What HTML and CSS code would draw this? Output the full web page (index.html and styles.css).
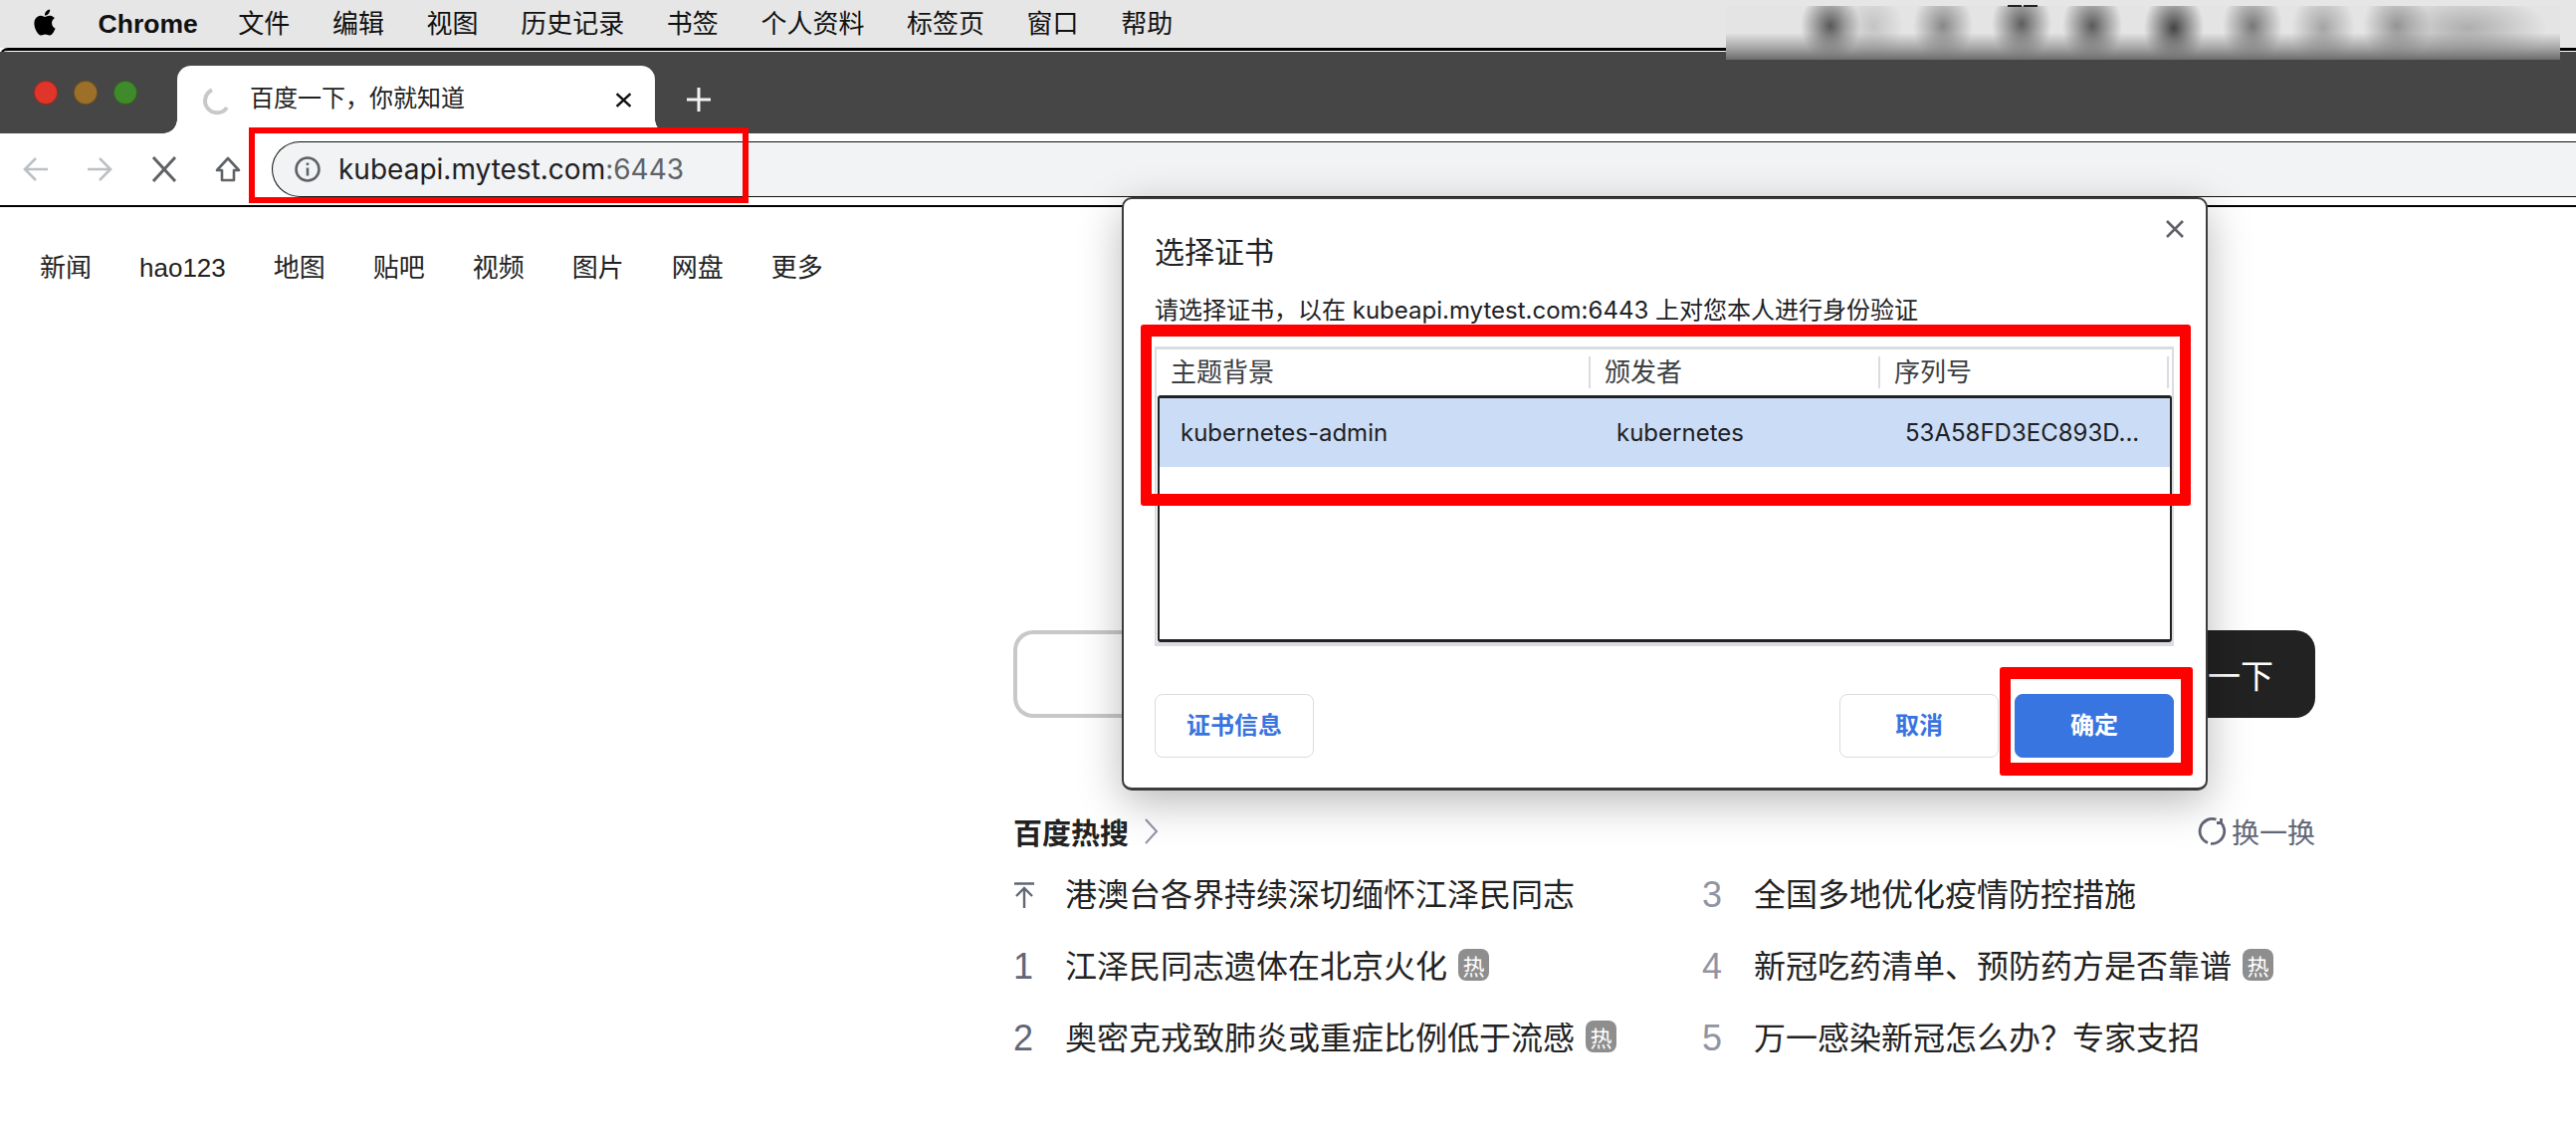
FILE: index.html
```html
<!DOCTYPE html>
<html lang="zh-CN">
<head>
<meta charset="utf-8">
<title>百度一下，你就知道</title>
<link rel="stylesheet" href="styles.css">
</head>
<body>
<header class="menubar">
  <svg class="apple" viewBox="0 0 24 24"><path d="M12.152 6.896c-.948 0-2.415-1.078-3.96-1.04-2.04.027-3.91 1.183-4.961 3.014-2.117 3.675-.546 9.103 1.519 12.09 1.013 1.454 2.208 3.09 3.792 3.039 1.52-.065 2.09-.987 3.935-.987 1.831 0 2.35.987 3.96.948 1.637-.026 2.676-1.48 3.676-2.948 1.156-1.688 1.636-3.325 1.662-3.415-.039-.013-3.182-1.221-3.22-4.857-.026-3.04 2.48-4.494 2.597-4.559-1.429-2.09-3.623-2.324-4.39-2.376-2-.156-3.675 1.09-4.61 1.09zM15.53 3.83c.843-1.012 1.4-2.427 1.245-3.83-1.207.052-2.662.805-3.532 1.818-.78.896-1.454 2.338-1.273 3.714 1.338.104 2.715-.688 3.559-1.701"/></svg>
  <strong class="app-name">Chrome</strong>
  <span>文件</span><span>编辑</span><span>视图</span><span>历史记录</span><span>书签</span><span>个人资料</span><span>标签页</span><span>窗口</span><span>帮助</span>
</header>

<div class="window">
  <div class="tabbar">
    <div class="lights"><i class="light red"></i><i class="light amber"></i><i class="light green"></i></div>
    <div class="tab">
      <svg class="spinner" viewBox="0 0 28 28"><path d="M11 2.4A12 12 0 1 0 26 20" fill="none" stroke="#c8c8c8" stroke-width="4"/></svg>
      <span class="tab-title">百度一下，你就知道</span>
      <svg class="tab-close" viewBox="0 0 16 14"><path d="M1.5 1l13 12M14.5 1l-13 12" fill="none" stroke="#111" stroke-width="2.4"/></svg>
    </div>
    <svg class="new-tab" viewBox="0 0 24 24"><path d="M12 0v24M0 12h24" fill="none" stroke="#f2f2f2" stroke-width="3"/></svg>
  </div>

  <div class="toolbar">
    <svg class="tool back" viewBox="0 0 26 26"><path d="M25 13H3M13 2L2 13l11 11" fill="none" stroke="#bcc0c4" stroke-width="2.6"/></svg>
    <svg class="tool forward" viewBox="0 0 26 26"><path d="M1 13h22M13 2l11 11-11 11" fill="none" stroke="#bcc0c4" stroke-width="2.6"/></svg>
    <svg class="tool stop" viewBox="0 0 26 26"><path d="M2 1l22 24M24 1L2 25" fill="none" stroke="#5f6368" stroke-width="3"/></svg>
    <svg class="tool home" viewBox="0 0 26 26"><path d="M13 2L2 14h5v10h12V14h5z" fill="none" stroke="#5f6368" stroke-width="2.6" stroke-linejoin="round"/></svg>
    <div class="omnibox">
      <svg class="info" viewBox="0 0 28 28"><circle cx="14" cy="14" r="11.5" fill="none" stroke="#5f6368" stroke-width="2.6"/><path d="M14 12.5v8M14 7.5v2.6" stroke="#5f6368" stroke-width="2.6" fill="none"/></svg>
      <span class="url">kubeapi.mytest.com<span class="port">:6443</span></span>
    </div>
  </div>

  <main class="page">
    <nav class="nav">
      <a>新闻</a><a>hao123</a><a>地图</a><a>贴吧</a><a>视频</a><a>图片</a><a>网盘</a><a>更多</a>
    </nav>
    <section class="center">
      <div class="search">
        <div class="search-input"></div>
        <div class="search-btn">百度一下</div>
      </div>
      <div class="hot-head">
        <div class="hot-title"><strong>百度热搜</strong>
          <svg class="chev" viewBox="0 0 15 26"><path d="M2 1l11 12L2 25" fill="none" stroke="#9195a3" stroke-width="2"/></svg>
        </div>
        <div class="refresh">
          <svg class="refresh-icon" viewBox="0 0 30 30"><path d="M18.5 3A12.5 12.5 0 0 0 10 26.5M13 27.3A12.5 12.5 0 0 0 22.5 5.5M23.5 2v4.5H19" fill="none" stroke="#626675" stroke-width="2.8"/></svg>
          <span>换一换</span>
        </div>
      </div>
      <ul class="hot-list">
        <li><svg class="pin" viewBox="0 0 22 26"><path d="M1 1.5h20M11 26V7M3 14l8-8 8 8" fill="none" stroke="#626675" stroke-width="2.4"/></svg><span class="hot-text">港澳台各界持续深切缅怀江泽民同志</span></li>
        <li><b class="rank low">3</b><span class="hot-text">全国多地优化疫情防控措施</span></li>
        <li><b class="rank">1</b><span class="hot-text">江泽民同志遗体在北京火化</span><em class="badge">热</em></li>
        <li><b class="rank low">4</b><span class="hot-text">新冠吃药清单、预防药方是否靠谱</span><em class="badge">热</em></li>
        <li><b class="rank">2</b><span class="hot-text">奥密克戎致肺炎或重症比例低于流感</span><em class="badge">热</em></li>
        <li><b class="rank low">5</b><span class="hot-text">万一感染新冠怎么办？专家支招</span></li>
      </ul>
    </section>
  </main>
</div>

<div class="blur-patch"></div>

<div class="dialog">
  <svg class="dialog-close" viewBox="0 0 20 18"><path d="M2 1l16 16M18 1L2 17" fill="none" stroke="#5f6368" stroke-width="2.6"/></svg>
  <h2 class="dialog-title">选择证书</h2>
  <p class="dialog-sub">请选择证书，以在 kubeapi.mytest.com:6443 上对您本人进行身份验证</p>
  <div class="table">
    <div class="thead">
      <span class="th th-subject">主题背景</span>
      <span class="th th-issuer">颁发者</span>
      <span class="th th-serial">序列号</span>
    </div>
    <div class="tbody">
      <div class="row">
        <span class="td td-subject">kubernetes-admin</span>
        <span class="td td-issuer">kubernetes</span>
        <span class="td td-serial">53A58FD3EC893D...</span>
      </div>
    </div>
  </div>
  <div class="dialog-actions">
    <button class="btn">证书信息</button>
    <div class="actions-right">
      <button class="btn">取消</button>
      <button class="btn primary">确定</button>
    </div>
  </div>
</div>

<div class="mark mark-url"></div>
<div class="mark mark-table"></div>
<div class="mark mark-ok"></div>
</body>
</html>
```
FILE: styles.css
```css
* { box-sizing: border-box; }
html, body { margin: 0; padding: 0; }
body {
  width: 2588px;
  height: 1148px;
  overflow: hidden;
  position: relative;
  background: #fff;
  color: #222;
  font-family: "Liberation Sans", "Noto Sans CJK SC", sans-serif;
}

/* macOS menu bar */
.menubar {
  height: 48px;
  background: #e6e6e6;
  display: flex;
  align-items: center;
  gap: 42.6px;
  padding-left: 32px;
  font-size: 26px;
  color: #111;
}
.menubar span { margin-top: -5px; }
.apple { width: 26px; height: 31px; margin-top: -4px; fill: #000; margin-right: -2px; }
.app-name { font-size: 26.5px; font-weight: 700; margin-right: -2px; }

/* browser window */
.window {
  border-top: 3px solid #000;
  border-top-left-radius: 8px;
}
.tabbar {
  height: 82px;
  margin-top: 1px;
  background: #464646;
  display: flex;
  align-items: flex-end;
  padding-left: 34px;
}
.lights { display: flex; gap: 16px; align-self: flex-start; margin-top: 29px; }
.light { width: 24px; height: 24px; border-radius: 50%; border: 1px solid rgba(0,0,0,.25); }
.red { background: #e0352a; }
.amber { background: #9c7028; }
.green { background: #3f8a2a; }
.tab {
  position: relative;
  margin-left: 40px;
  width: 480px;
  height: 68px;
  background: #fff;
  border-radius: 14px 14px 0 0;
  display: flex;
  align-items: flex-start;
  padding: 22px 23px 0 24px;
}
.tab::before {
  content: "";
  position: absolute;
  left: -14px;
  bottom: 0;
  width: 14px;
  height: 14px;
  background: radial-gradient(circle at 0 0, transparent 13.5px, #fff 14px);
}
.tab::after {
  content: "";
  position: absolute;
  right: -14px;
  bottom: 0;
  width: 14px;
  height: 14px;
  background: radial-gradient(circle at 100% 0, transparent 13.5px, #fff 14px);
}
.spinner { width: 28px; height: 28px; flex: none; }
.tab-title { margin-left: 21px; font-size: 24px; line-height: 22px; color: #222; flex: 1; }
.tab-close { width: 17px; height: 15px; margin-top: 5px; flex: none; }
.new-tab { width: 24px; height: 24px; margin: 0 0 22px 32px; }

.toolbar {
  height: 74px;
  background: #fff;
  border-bottom: 2px solid #000;
  padding: 8px 0 0 23px;
  display: flex;
  align-items: flex-start;
}
.tool { width: 26px; height: 26px; flex: none; margin-top: 15px; }
.forward { margin-left: 38px; }
.stop { margin-left: 39px; }
.home { margin-left: 38px; }
.omnibox {
  flex: 1;
  margin-left: 31px;
  height: 56px;
  border: solid #111;
  border-width: 1px 0 1px 1px;
  border-radius: 28px 0 0 28px;
  background: #f1f3f4;
  display: flex;
  align-items: center;
  padding-left: 21px;
}
.info { width: 28px; height: 28px; flex: none; }
.url { margin-left: 17px; font-family: Inter, "Liberation Sans", sans-serif; font-size: 28px; color: #202124; }
.port { color: #5f6368; }

/* Baidu page */
.page { background: #fff; }
.nav {
  display: flex;
  gap: 48px;
  padding: 46px 0 0 40px;
  font-size: 26px;
  line-height: 30px;
  color: #222;
}
.center { width: 1308px; margin: 0 0 0 1018px; padding-top: 349px; }
.search { display: flex; height: 88px; }
.search-input {
  flex: 1;
  border: 4px solid #c8c8c8;
  border-right: 0;
  border-radius: 20px 0 0 20px;
}
.search-btn {
  width: 216px;
  background: #222;
  color: #fff;
  font-size: 33px;
  border-radius: 0 20px 20px 0;
  display: flex;
  align-items: center;
  justify-content: center;
}
.hot-head {
  display: flex;
  justify-content: space-between;
  align-items: center;
  margin-top: 98px;
  height: 32px;
}
.hot-title { display: flex; align-items: center; gap: 15px; font-size: 29px; color: #222; }
.chev { width: 15px; height: 26px; }
.refresh { display: flex; align-items: center; gap: 4px; font-size: 28px; color: #626675; }
.refresh-icon { width: 30px; height: 30px; }
.hot-list {
  list-style: none;
  margin: 28px 0 0;
  padding: 0;
  display: grid;
  grid-template-columns: 692px 1fr;
  grid-auto-rows: 72px;
}
.hot-list li { display: flex; align-items: center; height: 40px; }
.pin { width: 22px; height: 26px; margin-right: 30px; flex: none; }
.rank { width: 52px; flex: none; font-size: 36px; font-weight: 400; color: #626675; }
.rank.low { color: #9195a3; }
.hot-text { font-size: 32px; line-height: 40px; color: #222; }
.badge {
  width: 31px;
  height: 32px;
  margin: -5px 0 0 11px;
  background: #8e8e8e;
  color: #fff;
  border-radius: 8px;
  font-size: 22px;
  font-style: normal;
  display: flex;
  align-items: center;
  justify-content: center;
}

/* redacted status icons */
.blur-patch {
  position: absolute;
  left: 1734px;
  top: 6px;
  width: 838px;
  height: 54px;
  background:
    linear-gradient(to bottom, rgba(100,100,100,0) 50%, rgba(105,105,105,.5) 78%, #6c6c6c 100%),
    radial-gradient(ellipse 30px 36px at 105px 20px, #585858, rgba(88,88,88,0)),
    radial-gradient(ellipse 30px 36px at 148px 20px, #c4c4c4, rgba(196,196,196,0)),
    radial-gradient(ellipse 30px 36px at 218px 20px, #888, rgba(136,136,136,0)),
    radial-gradient(ellipse 30px 38px at 297px 18px, #5e5e5e, rgba(94,94,94,0)),
    radial-gradient(ellipse 30px 38px at 368px 20px, #5a5a5a, rgba(90,90,90,0)),
    radial-gradient(ellipse 30px 38px at 450px 22px, #444, rgba(68,68,68,0)),
    radial-gradient(ellipse 30px 38px at 529px 20px, #787878, rgba(120,120,120,0)),
    radial-gradient(ellipse 32px 38px at 600px 22px, #a4a4a4, rgba(164,164,164,0)),
    radial-gradient(ellipse 34px 38px at 674px 20px, #949494, rgba(148,148,148,0)),
    radial-gradient(ellipse 80px 36px at 745px 22px, #aeaeae, rgba(174,174,174,0)),
    #e4e4e4;
}
.blur-patch::before {
  content: "";
  position: absolute;
  left: 283px;
  top: -1px;
  width: 30px;
  height: 2px;
  background: linear-gradient(to right, #222 45%, transparent 45%, transparent 55%, #222 55%);
}

/* certificate dialog */
.dialog {
  position: absolute;
  left: 1127px;
  top: 198px;
  width: 1091px;
  height: 596px;
  background: #fff;
  border: 2px solid #3c3c3c;
  border-bottom-width: 3px;
  border-radius: 10px;
  box-shadow: 0 12px 44px rgba(0,0,0,.28);
  padding: 0 32px 0 31px;
}
.dialog-close { position: absolute; right: 21px; top: 21px; width: 20px; height: 18px; }
.dialog-title { margin: 39px 0 0; font-size: 30px; line-height: 30px; font-weight: 400; color: #202124; }
.dialog-sub { margin: 29px 0 0; font-family: Inter, "Noto Sans CJK SC", sans-serif; font-size: 24px; line-height: 28px; color: #202124; }
.table {
  margin-top: 22px;
  height: 301px;
  border: 2px solid #dadce0;
  border-bottom-width: 4px;
  border-top-width: 3px;
}
.thead {
  display: flex;
  height: 46px;
  align-items: center;
  font-size: 26px;
  color: #3c4043;
}
.th { height: 32px; line-height: 32px; padding-left: 14px; border-right: 2px solid #dadce0; }
.th-subject { width: 436px; }
.th-issuer { width: 291px; }
.th-serial { flex: 1; margin-right: 3px; }
.tbody {
  height: 248px;
  margin: 0 0 0 1px;
  border: 2px solid #222;
  border-top-width: 3px;
  border-bottom-width: 3px;
  border-radius: 3px;
}
.row {
  display: flex;
  height: 69px;
  align-items: center;
  background: #cbdcf6;
  font-family: Inter, "Liberation Sans", sans-serif;
  font-size: 24px;
  color: #202124;
}
.td { padding-left: 21px; }
.td-subject { width: 438px; }
.td-issuer { width: 290px; }
.td-serial { flex: 1; }
.dialog-actions {
  display: flex;
  justify-content: space-between;
  margin-top: 48px;
}
.actions-right { display: flex; gap: 16px; }
.btn {
  width: 160px;
  height: 64px;
  background: #fff;
  border: 1px solid #dadce0;
  border-radius: 8px;
  color: #3874e0;
  font: 700 24px "Liberation Sans", "Noto Sans CJK SC", sans-serif;
  padding: 0 0 6px;
}
.btn.primary { background: #3875e0; border-color: #3875e0; color: #fff; }

/* red annotations */
.mark { position: absolute; border: solid #f00; border-radius: 3px; }
.mark-url { left: 250px; top: 128px; width: 502px; height: 76px; border-width: 6px; border-radius: 0; }
.mark-table { left: 1146px; top: 326px; width: 1055px; height: 182px; border-width: 12px 11px; }
.mark-ok { left: 2009px; top: 670px; width: 194px; height: 109px; border-width: 12px 12px 13px 11px; }
```
